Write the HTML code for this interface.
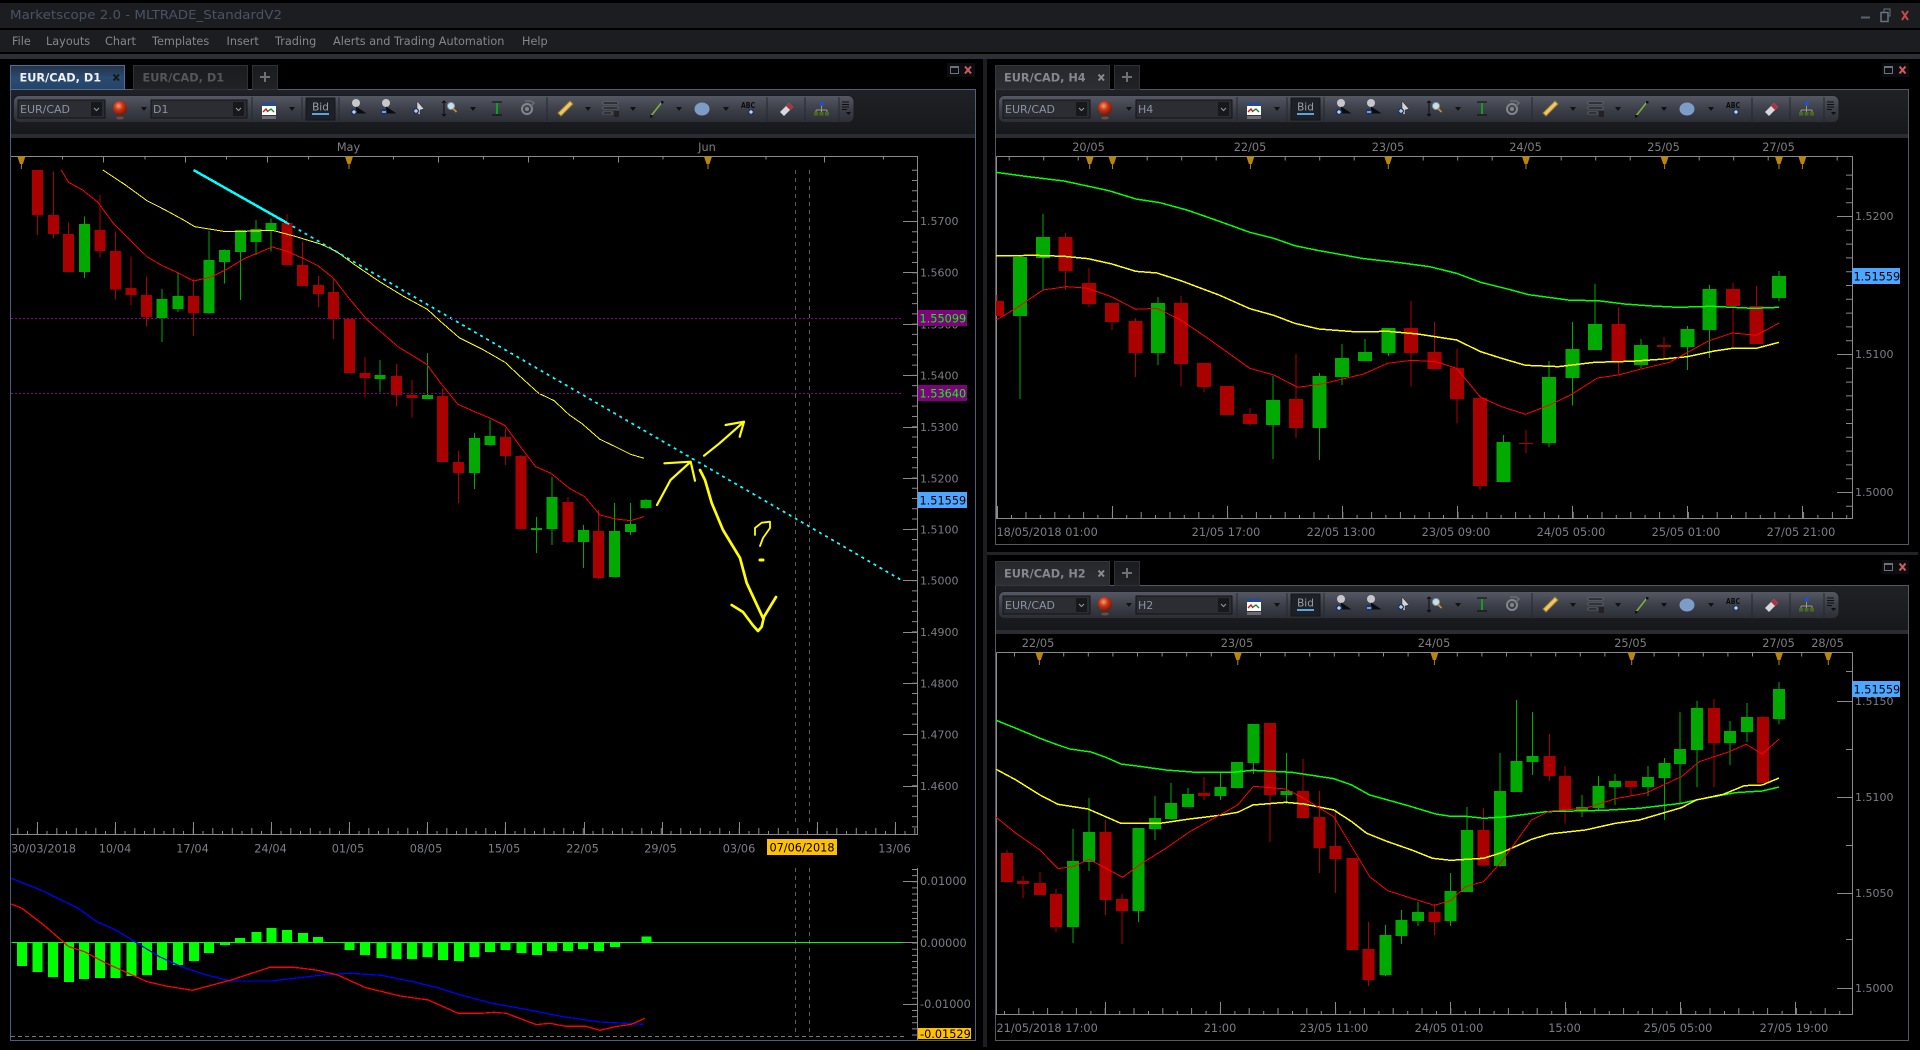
<!DOCTYPE html>
<html><head><meta charset="utf-8"><title>Marketscope 2.0</title>
<style>
html,body{margin:0;padding:0;background:#000;width:1920px;height:1050px;overflow:hidden}
svg{position:absolute;left:0;top:0;display:block}
text{font-family:"DejaVu Sans","Liberation Sans",sans-serif;font-size:11.3px;fill:#7c7e82}
.p{font-size:11px}
.m{font-size:11.25px;fill:#85878c}
.tb{font-size:11px;fill:#8a93a3}
.c{text-anchor:middle}
.cw,.cb{fill:none;vector-effect:non-scaling-stroke;shape-rendering:crispEdges}
.cw{stroke-width:1}
.r{stroke:#ab0000}
.g{stroke:#00aa00}
.l{fill:none;vector-effect:non-scaling-stroke;stroke-width:1;stroke-linejoin:round;shape-rendering:crispEdges}
.t{fill:none;stroke:#8a8a8a;stroke-width:1;shape-rendering:crispEdges}
.th{fill:none;vector-effect:non-scaling-stroke;stroke:#8a8a8a;stroke-width:1;shape-rendering:crispEdges}
.hw{fill:none;stroke:#ffff00;stroke-linecap:round;stroke-linejoin:round}
</style></head><body>
<svg width="1920" height="1050" viewBox="0 0 1920 1050" xmlns="http://www.w3.org/2000/svg">
<defs>
<linearGradient id="tg" x1="0" y1="0" x2="0" y2="1"><stop offset="0" stop-color="#555964"/><stop offset=".5" stop-color="#3d4049"/><stop offset="1" stop-color="#2b2e35"/></linearGradient>
<linearGradient id="ta" x1="0" y1="0" x2="0" y2="1"><stop offset="0" stop-color="#233246"/><stop offset=".5" stop-color="#2a4a70"/><stop offset="1" stop-color="#254468"/></linearGradient>
<linearGradient id="ti" x1="0" y1="0" x2="0" y2="1"><stop offset="0" stop-color="#1a1b1f"/><stop offset="1" stop-color="#202226"/></linearGradient>
<linearGradient id="ts" x1="0" y1="0" x2="0" y2="1"><stop offset="0" stop-color="#26282c"/><stop offset="1" stop-color="#2c2e33"/></linearGradient>
<linearGradient id="pb" x1="0" y1="0" x2="0" y2="1"><stop offset="0" stop-color="#202126"/><stop offset="1" stop-color="#17181b"/></linearGradient>
<radialGradient id="orb" cx=".4" cy=".35" r=".7"><stop offset="0" stop-color="#ff9a70"/><stop offset=".45" stop-color="#c83214"/><stop offset="1" stop-color="#6e1505"/></radialGradient>
<path id="mk" d="M-4 156.500H4L1.500 164H.5V169H-.5V164H-1.500Z" fill="#b8860b"/>
<symbol id="tbar" width="860" height="40" viewBox="0 90 860 40" overflow="visible">
<rect x="13.500" y="95.500" width="840.500" height="27" rx="6" fill="url(#tg)" stroke="#1b1c20"/>
<rect x="18" y="100" width="87" height="18" fill="#2b2d32" stroke="#121317"/>
<rect x="91" y="102" width="11" height="14" fill="#17181c"/><path d="M94 108l2.500 2.500 2.500-2.500" stroke="#999" fill="none"/>
<circle cx="120" cy="108" r="7" fill="url(#orb)"/><ellipse cx="120" cy="118" rx="4" ry="1.500" fill="#6a4a42"/>
<path d="M141 107h6l-3 4z" fill="#111"/>
<rect x="151" y="100" width="96" height="18" fill="#2b2d32" stroke="#121317"/>
<rect x="233" y="102" width="11" height="14" fill="#17181c"/><path d="M236 108l2.500 2.500 2.500-2.500" stroke="#999" fill="none"/>
<path d="M252 97V121M302 97V121M339 97V121M547 97V121M767 97V121M805 97V121M839 97V121" stroke="#26282e"/>
<rect x="262" y="103" width="14" height="12" fill="#fff"/><rect x="262" y="103" width="14" height="3" fill="#24489c"/>
<path d="M263 112l3-3 2 3" stroke="#d01818" fill="none" stroke-width="1.400"/><path d="M268 111l3-2 3 3" stroke="#109030" fill="none" stroke-width="1.400"/>
<rect x="262" y="116" width="14" height="3" fill="#6a6c72"/>
<path d="M289 107h6l-3 4z" fill="#111"/>
<rect x="306" y="98" width="29" height="22" fill="#1d2127" stroke="#14161a"/>
<rect x="312" y="113" width="17" height="2" fill="#5aa6dc"/>
<circle cx="356" cy="103" r="4" fill="#c6c8cb"/><path d="M356 107L365 113H356" fill="#0c0c0e" stroke="#0c0c0e"/><circle cx="354" cy="112" r="3.200" fill="#15356e"/><path d="M352 112h4M354 110v4" stroke="#fff"/>
<circle cx="386" cy="103" r="4" fill="#c6c8cb"/><path d="M386 107L395 113H386" fill="#0c0c0e" stroke="#0c0c0e"/><circle cx="384" cy="112" r="3.200" fill="#15356e"/><path d="M382 112h4" stroke="#fff"/>
<path d="M417 101L424 109L420 110V115L417 113Z" fill="#d5d6d9" stroke="#222" stroke-width=".5"/><circle cx="416" cy="111" r="3" fill="#15356e"/><path d="M414 111h4M416 109v4" stroke="#fff"/>
<path d="M444 101V116M442 103l2-2 2 2M442 114l2 2 2-2" stroke="#0c0c0e" fill="none"/><circle cx="451" cy="106" r="3.600" fill="#bfe0f0" stroke="#888"/><path d="M453.500 109l3 3" stroke="#d09030" stroke-width="1.600"/>
<path d="M470 107h6l-3 4z" fill="#111"/>
<path d="M492 102h10M492 115h10M497 103v11" stroke="#0c0c0e"/><path d="M497 103v11" stroke="#10a020" stroke-width="2"/>
<circle cx="527" cy="109" r="5" fill="none" stroke="#83858a" stroke-width="2"/><circle cx="527" cy="109" r="2" fill="#83858a"/><path d="M525 101h6l3 2-3 3" stroke="#6a6c72" fill="none" stroke-width="1.500"/>
<path d="M558 113L570 101L573 104L561 116Z" fill="#e9c870" stroke="#a07820"/>
<path d="M585 107h6l-3 4z" fill="#111"/>
<path d="M603 102h15v2h-15zM603 107h15v2h-15zM603 112h9v2h-9z" fill="#16171a" stroke="#80828a" stroke-width=".6"/><rect x="614" y="111" width="5" height="6" fill="#222"/>
<path d="M630 107h6l-3 4z" fill="#111"/>
<path d="M651 116L662 102" stroke="#7ab040" stroke-width="1.600"/><rect x="650" y="115" width="2.500" height="2.500" fill="#111"/><rect x="661" y="101" width="2.500" height="2.500" fill="#111"/>
<path d="M676 107h6l-3 4z" fill="#111"/>
<ellipse cx="702" cy="109" rx="7.500" ry="6.500" fill="#7d9cc8"/>
<path d="M723 107h6l-3 4z" fill="#111"/>
<circle cx="751" cy="112" r="3" fill="#15356e"/><path d="M749 112h4M751 110v4" stroke="#fff"/>
<path d="M780 112L789 103L793 107L784 116Z" fill="#d8d8da"/><path d="M786 106L789 103L793 107L790 110Z" fill="#b03040"/>
<rect x="820" y="102" width="3.500" height="4" fill="#2050d0"/><path d="M821.500 106v4M816 110h11M816 110v2M821.500 110v2M827 110v2" stroke="#90a070" fill="none"/><rect x="814" y="112" width="4" height="3.500" fill="#4a6a20"/><rect x="819.500" y="112" width="4" height="3.500" fill="#4a6a20"/><rect x="825" y="112" width="4" height="3.500" fill="#4a6a20"/>
<path d="M842 102h7M842 104.500h7M842 107h7M842 109.500h5" stroke="#0e0e10"/><path d="M846 112h5l-2.500 3z" fill="#0e0e10"/>
</symbol>
</defs>

<rect width="1920" height="1050" fill="#000"/>
<!-- window chrome -->
<rect y="3" width="1920" height="25" fill="#1c1d21"/>
<rect y="30" width="1920" height="22" fill="#1c1d21"/>
<rect y="54" width="1920" height="5" fill="#2d2f34"/>
<text x="10" y="19" style="font-size:12px;fill:#4a5364" textLength="272" lengthAdjust="spacingAndGlyphs">Marketscope 2.0 - MLTRADE_StandardV2</text>
<text x="12" y="45" class="m">File</text>
<text x="46" y="45" class="m">Layouts</text>
<text x="105" y="45" class="m">Chart</text>
<text x="152" y="45" class="m">Templates</text>
<text x="226.500" y="45" class="m">Insert</text>
<text x="275" y="45" class="m">Trading</text>
<text x="333" y="45" class="m">Alerts and Trading Automation</text>
<text x="522" y="45" class="m">Help</text>
<path d="M1861 17.500h9" stroke="#5a6270" stroke-width="2"/>
<path d="M1881 12.500h7v9h-7z" fill="none" stroke="#6a7280" stroke-width="1.500"/><path d="M1884 12v-3h6v7h-2" fill="none" stroke="#6a7280"/>
<path d="M1902 11l6 9M1908 11l-6 9" stroke="#c84a4a" stroke-width="2" fill="none"/>

<!-- splitters -->
<rect x="983" y="59" width="4" height="988" fill="#1c1d21"/>
<rect x="987" y="552" width="931" height="3" fill="#212327"/>

<!-- PANEL D1 -->
<rect x="11" y="90" width="965" height="44" fill="url(#pb)"/>
<rect x="11" y="134" width="965" height="4" fill="#2a2c31"/>
<rect x="10.500" y="89.500" width="965" height="951" fill="none" stroke="#4a6080"/>
<rect x="10.500" y="65.500" width="114" height="24" fill="url(#ta)" stroke="#4a6f98"/>
<rect x="133.500" y="65.500" width="114" height="24" fill="url(#ti)" stroke="#2f3136"/>
<rect x="252.500" y="65.500" width="25" height="24" fill="url(#ti)" stroke="#2f3136"/>
<text x="19.500" y="81.500" style="font-weight:bold;fill:#eef0f2">EUR/CAD, D1</text>
<path d="M113.500 74.500l5.500 6M119 74.500l-5.500 6" stroke="#15181c" stroke-width="2" fill="none"/>
<text x="142.500" y="81.500" style="font-weight:bold;fill:#54565a">EUR/CAD, D1</text>
<path d="M260 77h10M265 72v10" stroke="#6e7074" stroke-width="2" fill="none"/>
<rect x="947" y="63" width="28" height="14" fill="#0d0d0f"/>
<rect x="950.500" y="66.500" width="8" height="7" fill="none" stroke="#6a7280"/><path d="M950.500 67.500h8" stroke="#6a7280"/>
<path d="M965 66.500l6 7M971 66.500l-6 7" stroke="#d05a66" stroke-width="2" fill="none"/>
<use href="#tbar" x="0" y="90"/>
<text x="20" y="113" class="tb">EUR/CAD</text><text x="153" y="113" class="tb">D1</text><text x="320.500" y="110.500" class="c" style="font-size:10.500px;fill:#9ca0a6">Bid</text><text x="741" y="108" style="font-size:8px;fill:#0c0c0e;font-weight:bold" textLength="14" lengthAdjust="spacingAndGlyphs">ABC</text>

<!-- D1 labels -->
<text x="348.500" y="151" class="c">May</text><text x="707" y="151" class="c">Jun</text>
<!-- D1 frame -->
<path class="t" d="M11 156.500H917.500V834.500H11M917.500 868V1040"/>
<g transform="scale(.6122,.3333)"><path class="th" d="M102 468V478M169 468V488M237 468V478M303 468V488M370 468V478M437 468V488M504 468V478M643 468V478M716 468V488M790 468V478M863 468V488M937 468V478M1010 468V488M1083 468V478M1251 468V478M1347 468V488M1443 468V478"/></g>
<use href="#mk" x="21.400"/><use href="#mk" x="349"/><use href="#mk" x="708"/>
<!-- y axis d1 -->
<path d="M914.500 169.700V834" stroke="#8a8a8a" stroke-width="5" stroke-dasharray="1 9.260" fill="none"/>
<path class="t" d="M903 221.500H917M903 272.500H917M903 324.500H917M903 375.500H917M903 427.500H917M903 478.500H917M903 529.500H917M903 580.500H917M903 632.500H917M903 683.500H917M903 734.500H917M903 786.500H917"/>
<g><text class="p" x="920" y="225">1.5700</text><text class="p" x="920" y="276.500">1.5600</text><text class="p" x="920" y="328.500">1.5500</text><text class="p" x="920" y="379.500">1.5400</text><text class="p" x="920" y="431">1.5300</text><text class="p" x="920" y="482.500">1.5200</text><text class="p" x="920" y="533.500">1.5100</text><text class="p" x="920" y="584.500">1.5000</text><text class="p" x="920" y="636">1.4900</text><text class="p" x="920" y="687.500">1.4800</text><text class="p" x="920" y="738.500">1.4700</text><text class="p" x="920" y="790">1.4600</text></g>
<!-- bottom axis d1 -->
<path d="M17.300 831H917" stroke="#8a8a8a" stroke-width="6" stroke-dasharray="1 18.500" fill="none"/>
<path d="M27 832.500H917" stroke="#8a8a8a" stroke-width="3" stroke-dasharray="1 18.500" fill="none"/>
<path class="t" d="M37.500 822V834M115.500 822V834M193.500 822V834M271.500 822V834M349.500 822V834M427.500 822V834M505.500 822V834M584.500 822V834M662.500 822V834M739.500 822V834M817.500 822V834M895.500 822V834"/>
<text x="11" y="852.500">30/03/2018</text><text x="115" y="852.500" class="c">10/04</text><text x="192.500" y="852.500" class="c">17/04</text><text x="270.500" y="852.500" class="c">24/04</text><text x="348" y="852.500" class="c">01/05</text><text x="426" y="852.500" class="c">08/05</text><text x="504" y="852.500" class="c">15/05</text><text x="582.500" y="852.500" class="c">22/05</text><text x="660.500" y="852.500" class="c">29/05</text><text x="739" y="852.500" class="c">03/06</text><text x="894.500" y="852.500" class="c">13/06</text>
<rect x="767" y="839" width="70" height="16" fill="#ffc000"/><text x="802" y="851.500" class="c" style="fill:#000">07/06/2018</text>

<!-- D1 chart -->
<g transform="translate(0,150) scale(.6122,.3333)">
<path class="cw r" d="M61 60V255M87 65V265M112 218V366M163 135V322M189 245V448M214 320V465M239 380V530M316 385V558M469 192V345M494 275V408M520 378V471M545 385V567M571 507V669M596 621V742M648 642V770M673 690V802M723 715V936M749 903V1059M826 835V945M851 915V1137M928 1041V1179M978 1080V1287"/>
<path class="cw g" d="M138 200V384M265 417V576M291 367V486M341 243V492M367 298V400M393 240V450M418 210V315M443 205V305M621 630V727M698 609V747M775 849V1017M800 808V888M876 1101V1209M902 981V1185M953 1125V1254M1004 1059V1281M1030 1059V1155M1055 1047V1077"/>
<path class="cb r" style="stroke-width:11px" d="M61 60V195M87 195V252M112 252V366M163 240V303M189 303V418M214 414V435M239 435V501M316 438V489M469 219V345M494 345V408M520 405V432M545 426V507M571 507V669M596 669V684M648 678V735M673 735V744M723 738V936M749 936V969M826 861V918M851 918V1137M928 1056V1176M978 1143V1284"/>
<path class="cb g" style="stroke-width:11px" d="M138 222V366M265 447V504M291 438V477M341 330V489M367 300V336M393 240V306M418 237V276M443 219V240M621 675V687M698 735V747M775 864V969M800 858V885M876 1134V1140M902 1041V1137M953 1140V1176M1004 1143V1281M1030 1122V1146M1055 1050V1074"/>
<polyline class="l" stroke="#ff0000" points="100,60 112,97 135,120 160,157 185,220 215,275 240,320 265,347 290,368 316,393 345,381 370,358 400,325 445,291 470,305 495,325 520,348 545,385 570,445 600,510 625,550 650,590 697,643 720,700 748,763 775,785 800,804 825,827 850,890 875,950 900,970 930,1015 955,1040 980,1095 1005,1107 1030,1112 1052,1100"/>
<polyline class="l" stroke="#ffff00" points="168,60 205,105 240,152 270,180 300,210 318,230 345,238 365,244 400,244 445,241 480,258 525,283 550,305 580,345 620,395 660,440 698,478 720,515 750,563 790,600 825,637 850,680 880,730 905,752 930,795 950,820 980,868 1005,890 1030,913 1052,925"/>
<polyline class="l" stroke="#00ffff" style="stroke-width:2.500px" points="316,60 468,218"/>
<polyline class="l" stroke="#00ffff" style="stroke-width:1.800px;stroke-dasharray:3 4" points="468,218 1472,1290"/>
</g>
<path d="M11 318.500H903M11 393.500H903" stroke="#8a008a" stroke-dasharray="2 2"/>
<path d="M795.500 170V822M809.500 170V822M795.500 868V1036M809.500 868V1036" stroke="#5e5e5e" stroke-dasharray="4 4"/>
<rect x="918" y="310" width="49" height="16" fill="#800080"/><text x="919.500" y="322.500" style="fill:#00ff00">1.55099</text>
<rect x="918" y="385" width="49" height="16" fill="#800080"/><text x="919.500" y="397.500" style="fill:#00ff00">1.53640</text>
<rect x="918" y="492" width="49" height="16" fill="#4da6ff"/><text x="919.500" y="504.500" style="fill:#000">1.51559</text>
<!-- handwritten -->
<g class="hw">
<path stroke-width="2.200" d="M657 505L670.500 480L690.700 461.700M664.400 463.300L690.700 461.700L695 480.700"/>
<path stroke-width="2.200" d="M704 455.700L719.500 443.300L744 421.700M725.600 425L744 421.700L739.700 436.700"/>
<path stroke-width="2.700" d="M700 470L705 480L711.700 503L723 530L740 558L746.700 583L763 618M731.700 605L743 612L752.700 625L758 631L761.700 626.700L764 616.700L776 597"/>
<path stroke-width="1.800" d="M755 535V528L761.700 522.700L770 521.700V528L763 538L760 546"/>
<path stroke-width="3" d="M760 560H763"/>
</g>

<!-- D1 indicator -->
<g transform="translate(0,600) scale(.625,.3333)">
<path class="cb" stroke="#00ff00" style="stroke-width:10px" d="M35 1027V1098M60 1027V1116M85 1027V1131M110 1027V1146M134 1027V1137M160 1027V1134M185 1027V1134M210 1027V1128M235 1027V1125M259 1027V1110M285 1027V1095M310 1027V1083M334 1027V1059M360 1027V1035M384 1027V1014M410 1027V996M434 1027V984M459 1027V990M485 1027V999M509 1027V1011M559 1027V1050M584 1027V1065M610 1027V1074M634 1027V1077M659 1027V1077M684 1027V1071M709 1027V1080M734 1027V1083M759 1027V1071M784 1027V1056M809 1027V1050M834 1027V1059M859 1027V1065M883 1027V1053M909 1027V1053M933 1027V1047M958 1027V1053M984 1027V1041M1034 1027V1009"/>
<path class="cb" stroke="#00ff00" style="stroke-width:1px" d="M18 1027H1445"/>
<polyline class="l" stroke="#0000ff" style="stroke-width:1.300px" points="18,835 65,870 125,925 155,965 185,990 220,1030 255,1070 290,1100 330,1125 370,1143 435,1143 480,1133 520,1124 560,1120 610,1126 660,1145 700,1163 735,1184 785,1209 835,1226 900,1250 960,1266 1030,1273"/>
<polyline class="l" stroke="#ff0000" style="stroke-width:1.300px" points="18,912 35,925 70,975 110,1040 135,1055 170,1090 215,1128 235,1145 265,1158 308,1171 340,1155 370,1140 432,1102 470,1102 505,1110 540,1125 585,1163 640,1188 685,1200 733,1240 770,1240 790,1237 810,1240 858,1274 880,1270 905,1279 937,1279 960,1291 985,1280 1010,1273 1032,1255"/>
</g>
<path d="M11 1036.500H906" stroke="#777" stroke-dasharray="4 3"/>
<path class="t" d="M903 881.500H917M903 942.500H917M903 1004.500H917"/>
<path d="M914.500 869V1040" stroke="#8a8a8a" stroke-width="5" stroke-dasharray="1 5.130" fill="none"/>
<text x="920" y="885">0.01000</text><text x="920" y="947">0.00000</text><text x="920" y="1008">-0.01000</text>
<rect x="918" y="1028" width="53" height="11" fill="#ffc000"/><text x="920" y="1038" style="fill:#000">-0.01529</text>

<!-- PANEL H4 -->
<rect x="995" y="90" width="914" height="44" fill="url(#pb)"/>
<rect x="995" y="134" width="914" height="4" fill="#2a2c31"/>
<rect x="995.500" y="89.500" width="913" height="455" fill="none" stroke="#55585e"/>
<rect x="995.500" y="65.500" width="114" height="24" fill="url(#ts)" stroke="#35373c"/>
<rect x="1114.500" y="65.500" width="25" height="24" fill="url(#ti)" stroke="#2f3136"/>
<text x="1004" y="81.500" style="font-weight:bold;fill:#85878c">EUR/CAD, H4</text>
<path d="M1098.500 74.500l5.500 6M1104 74.500l-5.500 6" stroke="#8a8c90" stroke-width="2" fill="none"/>
<path d="M1122 77h10M1127 72v10" stroke="#6e7074" stroke-width="2" fill="none"/>
<rect x="1882" y="63" width="27" height="14" fill="#0d0d0f"/>
<rect x="1884.500" y="66.500" width="8" height="7" fill="none" stroke="#6a7280"/><path d="M1884.500 67.500h8" stroke="#6a7280"/>
<path d="M1899.500 66.500l6 7M1905.500 66.500l-6 7" stroke="#d05a66" stroke-width="2" fill="none"/>
<use href="#tbar" x="985" y="90"/>
<text x="1005" y="113" class="tb">EUR/CAD</text><text x="1138" y="113" class="tb">H4</text><text x="1305.500" y="110.500" class="c" style="font-size:10.500px;fill:#9ca0a6">Bid</text><text x="1726" y="108" style="font-size:8px;fill:#0c0c0e;font-weight:bold" textLength="14" lengthAdjust="spacingAndGlyphs">ABC</text>
<text x="1088.500" y="151" class="c">20/05</text><text x="1250" y="151" class="c">22/05</text><text x="1388" y="151" class="c">23/05</text><text x="1525.500" y="151" class="c">24/05</text><text x="1663.500" y="151" class="c">25/05</text><text x="1778.500" y="151" class="c">27/05</text>
<path class="t" d="M996.500 156.500H1852.500V518.500H996.500V156.500"/>
<path d="M1008.700 158.500H1850" stroke="#8a8a8a" stroke-width="4" stroke-dasharray="1 33.500" fill="none"/>
<use href="#mk" x="1089.700"/><use href="#mk" x="1112.500"/><use href="#mk" x="1250.400"/><use href="#mk" x="1388.300"/><use href="#mk" x="1526"/><use href="#mk" x="1664.600"/><use href="#mk" x="1779"/><use href="#mk" x="1802.400"/>
<path d="M1849 174.600V518" stroke="#8a8a8a" stroke-width="6" stroke-dasharray="1 12.800" fill="none"/>
<path class="t" d="M1837 216.500H1852M1837 354.500H1852M1837 492.500H1852"/>
<text class="p" x="1855" y="220">1.5200</text><text class="p" x="1855" y="358">1.5100</text><text class="p" x="1855" y="496">1.5000</text>
<rect x="1852" y="268" width="48" height="16" fill="#4da6ff"/><text x="1853.500" y="280.500" style="fill:#000">1.51559</text>
<path d="M1025.500 515H1852" stroke="#8a8a8a" stroke-width="6" stroke-dasharray="1 27.800" fill="none"/>
<path d="M1011 516.500H1852" stroke="#8a8a8a" stroke-width="3" stroke-dasharray="1 27.800" fill="none"/>
<path class="t" d="M997.500 506V518M1112.500 506V518M1227.500 506V518M1342.500 506V518M1457.500 506V518M1572.500 506V518M1687.500 506V518M1802.500 506V518"/>
<text x="996.500" y="536">18/05/2018 01:00</text><text x="1226" y="536" class="c">21/05 17:00</text><text x="1341" y="536" class="c">22/05 13:00</text><text x="1456" y="536" class="c">23/05 09:00</text><text x="1571" y="536" class="c">24/05 05:00</text><text x="1686" y="536" class="c">25/05 01:00</text><text x="1801" y="536" class="c">27/05 21:00</text>
<g transform="translate(980,150) scale(.5995,.3333)">
<path class="cw r" d="M28 435V453M143 249V420M182 354V471M220 459V540M259 504V681M335 438V708M374 639V726M412 708V795M450 774V828M527 612V864M719 453V708M758 516V657M796 597V820M834 741V1020M911 840V909M1065 472V672M1141 561V630M1256 399V591M1295 408V582"/>
<path class="cw g" d="M67 318V747M105 192V420M297 441V645M489 678V927M566 669V930M604 582V705M642 567V633M681 534V618M873 855V996M949 633V891M988 516V766M1026 402V600M1103 567V654M1180 528V660M1217 405V624M1333 363V453"/>
<path class="cb r" style="stroke-width:8px" d="M33 453V498"/>
<path class="cb r" style="stroke-width:14px" d="M143 261V363M182 399V462M220 459V516M259 513V609M335 459V642M374 639V711M412 708V795M450 792V822M527 747V834M719 534V609M758 606V657M796 654V747M834 744V1008M911 879V882M1065 522V636M1141 585V591M1256 417V468M1295 468V582"/>
<path class="cb g" style="stroke-width:14px" d="M67 321V498M105 261V324M297 459V609M489 750V825M566 678V834M604 624V681M642 606V633M681 534V609M873 876V996M949 681V879M988 597V684M1026 522V600M1103 585V645M1180 537V591M1217 417V540M1333 378V444"/>
<polyline class="l" stroke="#00ff00" style="stroke-width:1.500px" points="27,67 80,80 140,93 215,122 260,147 300,158 345,180 390,208 450,247 490,265 525,287 560,300 640,326 700,338 750,350 795,370 835,397 880,417 915,434 985,451 1030,452 1075,462 1120,468 1165,472 1220,469 1290,475 1333,472"/>
<polyline class="l" stroke="#ffff00" style="stroke-width:1.500px" points="27,318 90,316 140,319 180,326 220,342 260,364 295,369 335,392 400,436 450,476 490,496 525,520 565,537 630,546 680,544 730,552 795,570 835,605 870,625 910,646 965,650 1025,637 1085,634 1135,628 1180,620 1225,603 1255,595 1295,595 1333,577"/>
<polyline class="l" stroke="#ff0000" points="27,510 60,475 105,420 145,410 180,415 220,441 260,478 295,475 335,510 380,565 450,655 490,675 530,712 570,702 640,672 680,640 720,631 760,635 795,655 835,742 870,770 910,793 950,765 985,735 1030,684 1065,675 1105,656 1150,637 1215,573 1255,549 1295,556 1333,519"/>
</g>

<!-- PANEL H2 -->
<rect x="995" y="586" width="914" height="44" fill="url(#pb)"/>
<rect x="995" y="630" width="914" height="4" fill="#2a2c31"/>
<rect x="995.500" y="585.500" width="913" height="455" fill="none" stroke="#55585e"/>
<rect x="995.500" y="561.500" width="114" height="24" fill="url(#ts)" stroke="#35373c"/>
<rect x="1114.500" y="561.500" width="25" height="24" fill="url(#ti)" stroke="#2f3136"/>
<text x="1004" y="577.500" style="font-weight:bold;fill:#85878c">EUR/CAD, H2</text>
<path d="M1098.500 570.500l5.500 6M1104 570.500l-5.500 6" stroke="#8a8c90" stroke-width="2" fill="none"/>
<path d="M1122 573h10M1127 568v10" stroke="#6e7074" stroke-width="2" fill="none"/>
<rect x="1882" y="560" width="27" height="14" fill="#0d0d0f"/>
<rect x="1884.500" y="563.500" width="8" height="7" fill="none" stroke="#6a7280"/><path d="M1884.500 564.500h8" stroke="#6a7280"/>
<path d="M1899.500 563.500l6 7M1905.500 563.500l-6 7" stroke="#d05a66" stroke-width="2" fill="none"/>
<use href="#tbar" x="985" y="586"/>
<text x="1005" y="609" class="tb">EUR/CAD</text><text x="1138" y="609" class="tb">H2</text><text x="1305.500" y="606.500" class="c" style="font-size:10.500px;fill:#9ca0a6">Bid</text><text x="1726" y="604" style="font-size:8px;fill:#0c0c0e;font-weight:bold" textLength="14" lengthAdjust="spacingAndGlyphs">ABC</text>
<text x="1038" y="647" class="c">22/05</text><text x="1237" y="647" class="c">23/05</text><text x="1434" y="647" class="c">24/05</text><text x="1630.500" y="647" class="c">25/05</text><text x="1778.500" y="647" class="c">27/05</text><text x="1827.500" y="647" class="c">28/05</text>
<path class="t" d="M996.500 652.500H1852.500V1014.500H996.500V652.500"/>
<path d="M1014 654.500H1850" stroke="#8a8a8a" stroke-width="4" stroke-dasharray="1 23.600" fill="none"/>
<g transform="translate(0,496)"><use href="#mk" x="1039.400"/><use href="#mk" x="1237.800"/><use href="#mk" x="1434.400"/><use href="#mk" x="1631.700"/><use href="#mk" x="1779"/><use href="#mk" x="1828.300"/></g>
<path class="t" d="M1846 671.500H1852M1837 701.500H1852M1846 749.500H1852M1837 797.500H1852M1846 845.500H1852M1837 893.500H1852M1846 939.500H1852M1837 988.500H1852"/>
<text class="p" x="1855" y="705">1.5150</text><text class="p" x="1855" y="801">1.5100</text><text class="p" x="1855" y="897">1.5050</text><text class="p" x="1855" y="992">1.5000</text>
<rect x="1852" y="681" width="48" height="16" fill="#4da6ff"/><text x="1853.500" y="693.500" style="fill:#000">1.51559</text>
<path d="M1018.300 1011H1852" stroke="#8a8a8a" stroke-width="6" stroke-dasharray="1 27.800" fill="none"/>
<path d="M1004 1012.500H1852" stroke="#8a8a8a" stroke-width="3" stroke-dasharray="1 27.800" fill="none"/>
<path class="t" d="M1105.500 1002V1014M1220.500 1002V1014M1335.500 1002V1014M1450.500 1002V1014M1565.500 1002V1014M1680.500 1002V1014M1795.500 1002V1014"/>
<text x="996.500" y="1032">21/05/2018 17:00</text><text x="1220" y="1032" class="c">21:00</text><text x="1334" y="1032" class="c">23/05 11:00</text><text x="1449" y="1032" class="c">24/05 01:00</text><text x="1564.500" y="1032" class="c">15:00</text><text x="1678" y="1032" class="c">25/05 05:00</text><text x="1794" y="1032" class="c">27/05 19:00</text>
<g transform="translate(980,550) scale(.5995,.3333)">
<path class="cw r" d="M45 900V996M72 978V1044M100 966V1035M127 1017V1146M209 810V1095M237 1032V1182M374 681V750M484 519V876M539 627V804M566 723V969M593 777V1029M621 924V1200M648 1116V1308M758 1062V1155M840 774V950M950 552V693M976 648V820M1086 693V738M1224 447V711M1306 498V699"/>
<path class="cw g" d="M155 837V1179M182 744V963M264 834V1116M292 738V870M319 699V810M347 714V771M401 669V750M429 636V714M456 522V672M511 609V762M676 1125V1278M703 1080V1182M731 1056V1128M785 969V1128M812 771V1026M867 609V951M895 450V726M922 486V675M1004 735V801M1032 678V780M1059 672V765M1114 648V738M1142 624V810M1168 486V760M1196 453V711M1251 513V645M1279 459V576M1333 396V522"/>
<path class="cb r" style="stroke-width:12px" d="M45 909V996M72 993V1002M100 999V1035M127 1032V1131M209 846V1050M237 1047V1083M374 729V738M484 519V735M539 723V804M566 801V894M593 888V927M621 924V1200M648 1197V1290M758 1086V1116M840 840V946M950 618V678M976 678V778M1086 693V711M1224 474V579M1306 501V699"/>
<path class="cb g" style="stroke-width:12px" d="M155 933V1131M182 846V936M264 834V1083M292 804V837M319 759V807M347 732V771M401 711V738M429 636V714M456 522V639M511 723V735M676 1155V1275M703 1110V1158M731 1086V1113M785 1023V1113M812 840V1026M867 723V948M895 633V726M922 618V636M1004 771V783M1032 708V774M1059 693V711M1114 681V711M1142 639V684M1168 597V642M1196 474V600M1251 543V579M1279 501V546M1333 417V507"/>
<polyline class="l" stroke="#00ff00" style="stroke-width:1.500px" points="27,511 60,535 100,565 130,585 150,597 185,606 210,622 235,642 270,650 310,660 360,667 420,667 455,661 520,667 590,686 620,705 650,735 710,765 760,792 785,799 810,799 840,805 880,800 945,785 1040,781 1100,775 1170,760 1200,748 1260,728 1305,723 1333,711"/>
<polyline class="l" stroke="#ffff00" style="stroke-width:1.500px" points="27,658 60,690 100,735 130,763 180,777 235,820 300,820 350,807 400,796 430,787 455,765 510,757 540,762 590,780 620,815 645,850 680,875 720,900 755,925 785,931 840,925 870,908 920,868 950,852 1010,840 1060,820 1100,810 1170,773 1195,750 1240,733 1275,707 1305,705 1333,684"/>
<polyline class="l" stroke="#ff0000" points="27,802 60,850 100,900 130,956 155,950 182,928 238,982 270,940 310,895 350,845 400,795 430,765 456,709 510,717 540,745 590,800 620,890 650,980 680,1022 720,1045 758,1066 785,1052 810,1010 840,995 870,935 920,810 950,783 1010,775 1060,746 1110,730 1170,680 1200,635 1250,605 1278,583 1305,612 1333,567"/>
</g>
</svg>
</body></html>
